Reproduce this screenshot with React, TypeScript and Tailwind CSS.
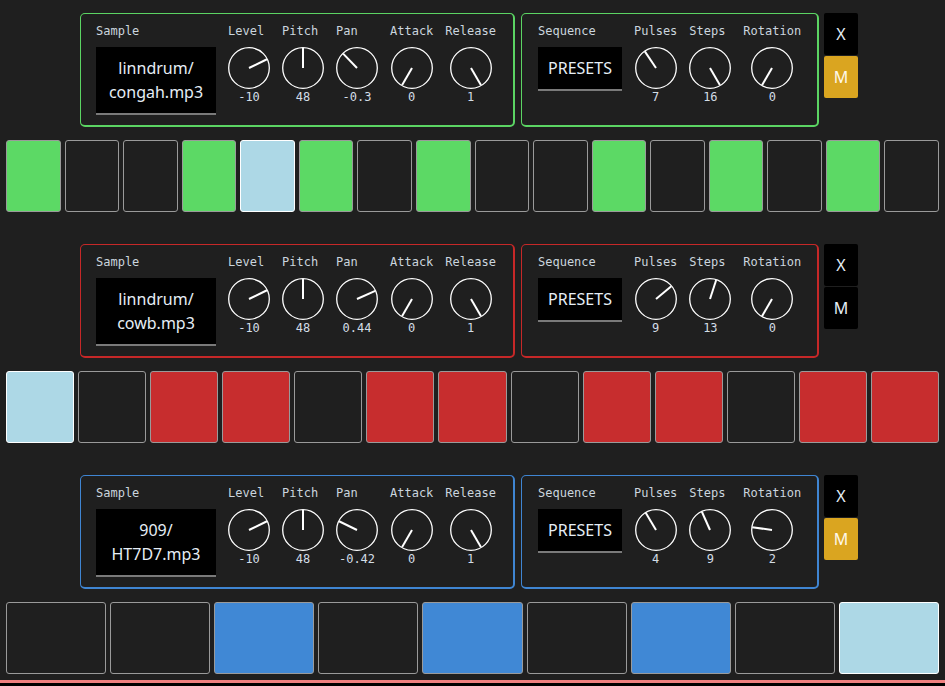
type Cell = 'on' | 'off' | 'cur';

type Track = {
  color: string;
  border: string;
  fill: string;
  sample: string[];
  synth: { label: string; value: string; angle: number }[];
  seq: { label: string; value: string; angle: number }[];
  muted: boolean;
  cells: Cell[];
};

const parse = (s: string): Cell[] =>
  s.split('').map((c) => (c === 'x' ? 'on' : c === 'c' ? 'cur' : 'off'));

const tracks: Track[] = [
  {
    color: 'green',
    border: 'border-[#5bd463]',
    fill: 'bg-[#5cd965]',
    sample: ['linndrum/', 'congah.mp3'],
    synth: [
      { label: 'Level', value: '-10', angle: 64 },
      { label: 'Pitch', value: '48', angle: 0 },
      { label: 'Pan', value: '-0.3', angle: -44 },
      { label: 'Attack', value: '0', angle: -150 },
      { label: 'Release', value: '1', angle: 150 },
    ],
    seq: [
      { label: 'Pulses', value: '7', angle: -34 },
      { label: 'Steps', value: '16', angle: 150 },
      { label: 'Rotation', value: '0', angle: -150 },
    ],
    muted: true,
    cells: parse('x..xcx.x..x.x.x.'),
  },
  {
    color: 'red',
    border: 'border-[#c62828]',
    fill: 'bg-[#c72d2e]',
    sample: ['linndrum/', 'cowb.mp3'],
    synth: [
      { label: 'Level', value: '-10', angle: 64 },
      { label: 'Pitch', value: '48', angle: 0 },
      { label: 'Pan', value: '0.44', angle: 66 },
      { label: 'Attack', value: '0', angle: -150 },
      { label: 'Release', value: '1', angle: 150 },
    ],
    seq: [
      { label: 'Pulses', value: '9', angle: 50 },
      { label: 'Steps', value: '13', angle: 18 },
      { label: 'Rotation', value: '0', angle: -150 },
    ],
    muted: false,
    cells: parse('c.xx.xx.xx.xx'),
  },
  {
    color: 'blue',
    border: 'border-[#3f85d2]',
    fill: 'bg-[#4088d5]',
    sample: ['909/', 'HT7D7.mp3'],
    synth: [
      { label: 'Level', value: '-10', angle: 64 },
      { label: 'Pitch', value: '48', angle: 0 },
      { label: 'Pan', value: '-0.42', angle: -64 },
      { label: 'Attack', value: '0', angle: -150 },
      { label: 'Release', value: '1', angle: 150 },
    ],
    seq: [
      { label: 'Pulses', value: '4', angle: -31 },
      { label: 'Steps', value: '9', angle: -24 },
      { label: 'Rotation', value: '2', angle: -82 },
    ],
    muted: true,
    cells: parse('..x.x.x.c'),
  },
];

const mono = "font-['DejaVu_Sans_Mono',monospace]";
const sans = "font-['Noto_Sans',sans-serif]";

function Knob({ label, value, angle }: { label: string; value: string; angle: number }) {
  const a = (angle * Math.PI) / 180;
  const x = 21 + 20 * Math.sin(a);
  const y = 21 - 20 * Math.cos(a);
  return (
    <div className="flex flex-col">
      <div className={`${mono} text-[12px] leading-4 text-[#cbd5de] whitespace-nowrap`}>{label}</div>
      <svg width="42" height="42" viewBox="0 0 42 42" className="mt-2 mx-auto block">
        <circle cx="21" cy="21" r="20.3" fill="none" stroke="#fff" strokeWidth="1.3" />
        <line x1="21" y1="21" x2={x} y2={y} stroke="#fff" strokeWidth="2" />
      </svg>
      <div className={`${mono} text-[12px] leading-4 text-[#d3dde6] text-center`}>{value}</div>
    </div>
  );
}

function TrackRow({ t }: { t: Track }) {
  return (
    <div className="pt-[13px] pb-[6px]">
      <div className="flex pl-[80px]">
        {/* Sample + synth */}
        <div
          className={`w-[435px] h-[114px] border-t border-l border-r-2 border-b-2 ${t.border} rounded-[5px] pl-[15px] pt-[9px] flex gap-3`}
        >
          <div className="w-[120px] flex flex-col">
            <div className={`${mono} text-[12px] leading-4 text-[#cbd5de]`}>Sample</div>
            <div
              className={`mt-2 h-[68px] bg-black border-b-2 border-[#7a7a7a] flex flex-col items-center justify-center ${sans} text-[16px] leading-6 text-[#e6eef6]`}
            >
              {t.sample.map((l) => (
                <span key={l}>{l}</span>
              ))}
            </div>
          </div>
          {t.synth.map((k) => (
            <Knob key={k.label} {...k} />
          ))}
        </div>

        {/* Sequence */}
        <div
          className={`ml-[6px] w-[298px] h-[114px] border-t border-l border-r-2 border-b-2 ${t.border} rounded-[5px] pl-[16px] pt-[9px] flex gap-3`}
        >
          <div className="w-[84px] flex flex-col">
            <div className={`${mono} text-[12px] leading-4 text-[#cbd5de]`}>Sequence</div>
            <div
              className={`mt-2 h-[44px] bg-black border-b-2 border-[#7a7a7a] flex items-center justify-center ${sans} text-[16px] text-[#e6eef6]`}
            >
              PRESETS
            </div>
          </div>
          {t.seq.map((k) => (
            <Knob key={k.label} {...k} />
          ))}
        </div>

        {/* X / M */}
        <div className={`ml-[5px] w-[34px] flex flex-col gap-px ${sans} text-[16px]`}>
          <button className="h-[42px] bg-black rounded-[2px] text-[#e6eef6]">X</button>
          <button
            className={`h-[42px] rounded-[2px] ${t.muted ? 'bg-[#daa520] text-[#fff8ea]' : 'bg-black text-[#e6eef6]'}`}
          >
            M
          </button>
        </div>
      </div>

      {/* Steps */}
      <div className="mt-[13px] flex gap-1 px-[6px] h-[72px]">
        {t.cells.map((c, i) => (
          <div
            key={i}
            className={`flex-1 rounded-[3px] border ${
              c === 'cur'
                ? 'bg-[#add8e6] border-white'
                : c === 'on'
                  ? `${t.fill} border-[#9a9a9a]`
                  : 'bg-[#1f1f1f] border-[#9a9a9a]'
            }`}
          />
        ))}
      </div>
    </div>
  );
}

export default function App() {
  return (
    <div className="min-h-screen bg-[#1f1f1f] flex flex-col">
      <div className="flex flex-col gap-[13px]">
        {tracks.map((t) => (
          <TrackRow key={t.color} t={t} />
        ))}
      </div>
      <div className="flex-1 min-h-[40px] border-t-[3px] border-[#f08080] bg-black" />
    </div>
  );
}
